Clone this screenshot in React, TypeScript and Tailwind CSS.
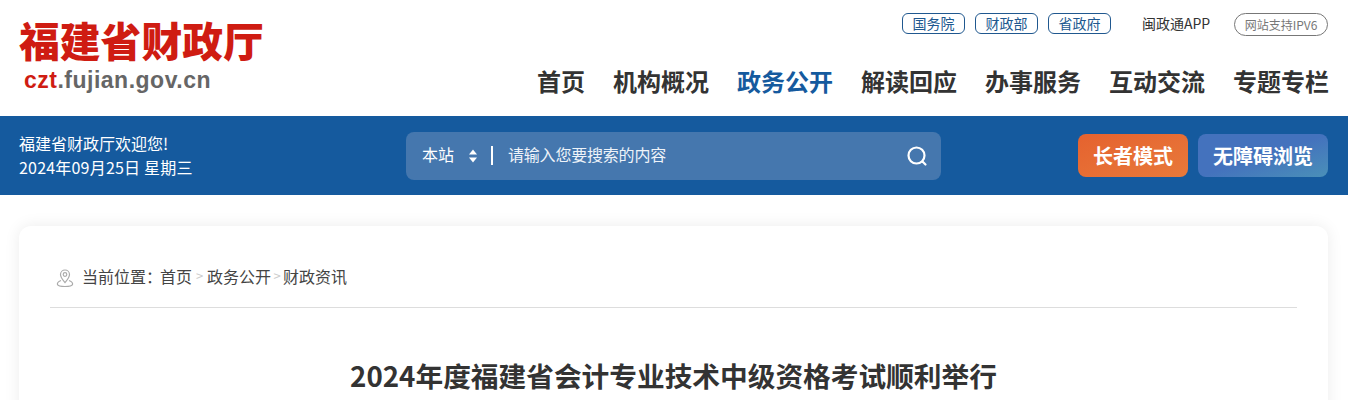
const FONT = '"Noto Sans CJK SC", "Liberation Sans", sans-serif';
const NAV = ["首页", "机构概况", "政务公开", "解读回应", "办事服务", "互动交流", "专题专栏"];
const LINKS = ["国务院", "财政部", "省政府"];

function Header() {
  return (
    <div className="h-[116px] bg-white flex justify-between pl-5 pr-[20px]">
      <div className="w-[260px] pt-[14px]">
        <div className="text-[40.8px] leading-[52px] font-black text-[#cf1c12] -ml-[1px] whitespace-nowrap">福建省财政厅</div>
        <div className="ml-[4px] text-[23px] leading-[28px] font-bold text-[#666] font-['Liberation_Sans'] tracking-[0.5px]">
          <span className="text-[#cf1c12]">czt</span>.fujian.gov.cn
        </div>
      </div>
      <div className="flex flex-col items-end pt-[13px]">
        <div className="flex items-start text-[14px] text-[#20588f]">
          {LINKS.map((l) => (
            <span key={l} className="w-[63px] h-[21px] ml-[10px] pb-[2px] flex items-center justify-center border border-[#20588f] rounded-[6px] leading-none">{l}</span>
          ))}
          <span className="ml-[31px] w-[68px] h-[21px] pb-[2px] flex items-center text-[#333] leading-none whitespace-nowrap">闽政通APP</span>
          <span className="ml-[24px] w-[94px] h-[23px] flex items-center justify-center border border-[#777] rounded-full text-[12px] text-[#777] leading-none">网站支持IPV6</span>
        </div>
        <div className="flex gap-[28px] mt-[28px] -mr-[1px] text-[24px] leading-[34px] font-bold text-[#333]">
          {NAV.map((n) => (
            <span key={n} className={n === "政务公开" ? "text-[#155a9e]" : ""}>{n}</span>
          ))}
        </div>
      </div>
    </div>
  );
}

function SearchBar() {
  return (
    <div className="w-[535px] h-[48px] rounded-[8px] bg-[#4577ae] flex items-center pl-[16px] pr-[12px] text-white text-[16px]">
      <span className="-mt-[3px]">本站</span>
      <svg className="ml-[12px]" width="14" height="16" viewBox="0 0 14 16" fill="#fff">
        <path d="M7 1.500 11 6.500H3Z" />
        <path d="M7 14.500 3 9.500H11Z" />
      </svg>
      <span className="ml-[11px] w-[2px] h-[19px] -mt-[1px] bg-white" />
      <span className="ml-[15px] flex-1 -mt-[3px] tracking-[-0.2px] text-[#eef3f9]">请输入您要搜索的内容</span>
      <svg width="24" height="24" viewBox="0 0 24 24" fill="none" stroke="#fff" strokeWidth="2.200" strokeLinecap="round">
        <circle cx="11.500" cy="11.500" r="8" />
        <path d="M17.500 17.500 20.500 20.500" />
      </svg>
    </div>
  );
}

function Toolbar() {
  return (
    <div className="h-[79px] bg-[#155a9e] flex items-center justify-between pl-[19px] pr-[20px] text-white">
      <div className="w-[387px] text-[16px] leading-[24px] -mt-[1px]">
        <div>福建省财政厅欢迎您!</div>
        <div className="tracking-[0.2px]">2024年09月25日 星期三</div>
      </div>
      <SearchBar />
      <div className="w-[387px] flex justify-end gap-[10px] text-[20px] font-bold">
        <span className="w-[110px] h-[43px] rounded-[8px] flex items-center justify-center bg-gradient-to-br from-[#e5622f] to-[#e8793a]">长者模式</span>
        <span className="w-[130px] h-[43px] rounded-[8px] flex items-center justify-center bg-gradient-to-br from-[#4472bd] via-[#4472bd] to-[#4a90b8]">无障碍浏览</span>
      </div>
    </div>
  );
}

function Card() {
  return (
    <div className="ml-[19px] mr-[20px] mt-[31px] h-[300px] rounded-[12px] bg-white shadow-[0_0_16px_rgba(0,0,0,0.08)] px-[31px]">
      <div className="h-[82px] border-b border-[#ddd] flex items-center pt-[22px] text-[16px] text-[#444]">
        <svg className="ml-[5px]" width="20" height="20" viewBox="0 0 20 20" fill="none" stroke="#aaa" strokeWidth="1.200">
          <path d="M10 14.500C7.500 11.500 5.500 9.500 5.500 6.500a4.500 4.500 0 0 1 9 0c0 3-2 5-4.500 8Z" />
          <circle cx="10" cy="6.500" r="1.800" />
          <path d="M6 12.500C3.500 13.500 2 15 2.500 16.500c.5 1.500 3 2 7.500 2s7-.5 7.500-2c.5-1.500-1-3-3.500-4" />
        </svg>
        <div className="flex items-center -mt-[3px]">
          <span className="ml-[7px] w-[78px] whitespace-nowrap">当前位置：</span>
          <span>首页</span>
          <span className="text-[#ccc] text-[13px] w-[15px] text-center">&gt;</span>
          <span>政务公开</span>
          <span className="text-[#ccc] text-[13px] w-[12px] text-center">&gt;</span>
          <span>财政资讯</span>
        </div>
      </div>
      <h1 className="mt-[47px] text-center text-[27.7px] leading-[40px] font-bold text-[#333]">2024年度福建省会计专业技术中级资格考试顺利举行</h1>
    </div>
  );
}

export default function App() {
  return (
    <div className="h-[400px] overflow-hidden bg-white" style={{ fontFamily: FONT }}>
      <Header />
      <Toolbar />
      <Card />
    </div>
  );
}
